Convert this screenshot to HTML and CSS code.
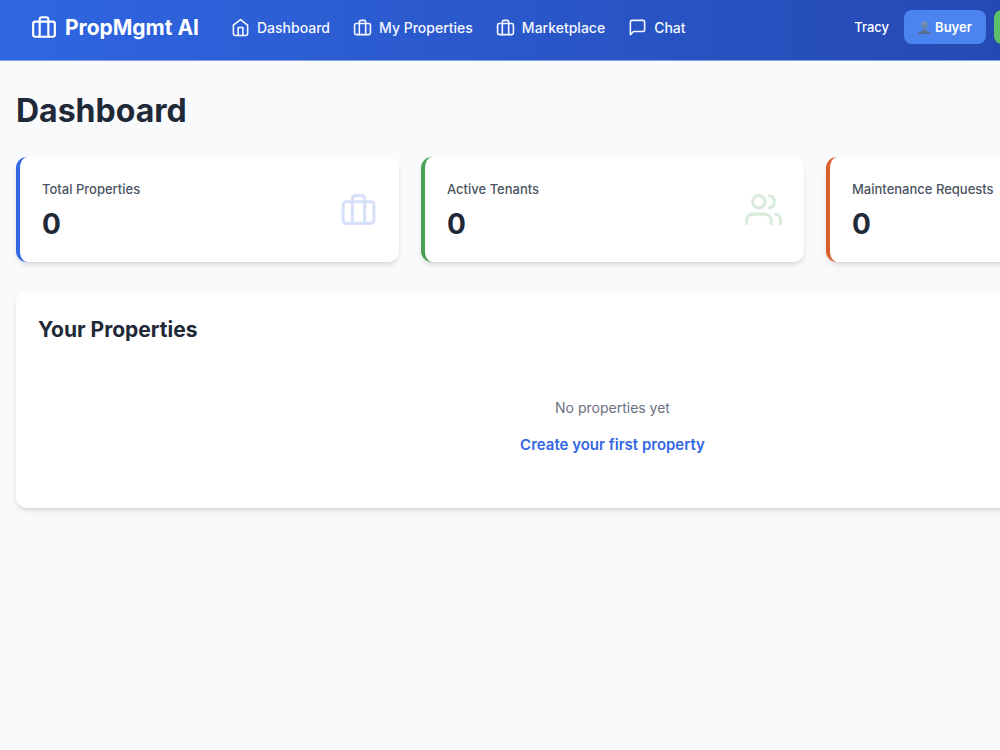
FILE: index.html
```html
<!DOCTYPE html>
<html lang="en">
<head>
<meta charset="utf-8">
<title>PropMgmt AI</title>
<link rel="stylesheet" href="styles.css">
</head>
<body>
<svg class="symbols" aria-hidden="true">
  <symbol id="luggage" viewBox="0 0 24 24"><path d="M8 21V5a2 2 0 0 1 2-2h4a2 2 0 0 1 2 2v16"/><rect x="2" y="7" width="20" height="14" rx="2"/></symbol>
  <symbol id="home" viewBox="0 0 24 24"><path d="m3 9 9-7 9 7v11a2 2 0 0 1-2 2H5a2 2 0 0 1-2-2z"/><path d="M9 22V12h6v10"/></symbol>
  <symbol id="chat" viewBox="0 0 24 24"><path d="M21 15a2 2 0 0 1-2 2H7l-4 4V5a2 2 0 0 1 2-2h14a2 2 0 0 1 2 2z"/></symbol>
  <symbol id="users" viewBox="0 0 24 24"><path d="M17 21v-2a4 4 0 0 0-4-4H5a4 4 0 0 0-4 4v2"/><circle cx="9" cy="7" r="4"/><path d="M23 21v-2a4 4 0 0 0-3-3.87"/><path d="M16 3.13a4 4 0 0 1 0 7.75"/></symbol>
</svg>
<div class="page">
  <header class="navbar">
    <a class="brand" href="#"><svg class="icon icon-brand"><use href="#luggage"/></svg>PropMgmt AI</a>
    <nav class="links">
      <a class="link" href="#"><svg class="icon"><use href="#home"/></svg>Dashboard</a>
      <a class="link" href="#"><svg class="icon"><use href="#luggage"/></svg>My Properties</a>
      <a class="link" href="#"><svg class="icon"><use href="#luggage"/></svg>Marketplace</a>
      <a class="link" href="#"><svg class="icon"><use href="#chat"/></svg>Chat</a>
    </nav>
    <div class="account">
      <span class="user">Tracy</span>
      <button class="role" type="button">
        <svg class="person" viewBox="0 0 13 13" aria-hidden="true">
          <defs><linearGradient id="bust" x1="0" y1="0" x2="0" y2="1"><stop offset="0" stop-color="#7897bb"/><stop offset="1" stop-color="#506a94"/></linearGradient></defs>
          <path fill="url(#bust)" d="M6.500 0C4.400 0 3.200 1.500 3.300 3.700c.1 1.900.8 3.200 1.900 4v1.200C4.400 9.900 0 9.700 0 13h13c0-3.300-4.400-3.100-5.200-4.100V7.700c1.100-.8 1.800-2.100 1.900-4C9.800 1.500 8.600 0 6.500 0z"/>
        </svg>Buyer</button>
      <button class="action" type="button"></button>
    </div>
  </header>
  <main class="content">
    <h1 class="title">Dashboard</h1>
    <section class="stats">
      <div class="card stat stat-blue">
        <div><p class="label">Total Properties</p><p class="value">0</p></div>
        <svg class="icon icon-stat"><use href="#luggage"/></svg>
      </div>
      <div class="card stat stat-green">
        <div><p class="label">Active Tenants</p><p class="value">0</p></div>
        <svg class="icon icon-stat"><use href="#users"/></svg>
      </div>
      <div class="card stat stat-orange">
        <div><p class="label">Maintenance Requests</p><p class="value">0</p></div>
      </div>
    </section>
    <section class="card panel">
      <h2 class="subtitle">Your Properties</h2>
      <div class="empty">
        <p class="message">No properties yet</p>
        <a class="create" href="#">Create your first property</a>
      </div>
    </section>
  </main>
</div>
</body>
</html>
```
FILE: styles.css
```css
* { box-sizing: border-box; }
body {
  margin: 0;
  overflow-x: hidden;
  background: #f9fafc;
  color: #1f2937;
  font-family: Inter, "Liberation Sans", sans-serif;
}
h1, h2, p { margin: 0; }
a { text-decoration: none; }
button { border: 0; padding: 0; font-family: inherit; }
.symbols { display: none; }
.page { min-width: 1225px; }

.icon {
  width: 19px;
  height: 19px;
  flex: none;
  fill: none;
  stroke: currentColor;
  stroke-width: 2;
  stroke-linecap: round;
  stroke-linejoin: round;
}
.icon-brand { width: 26px; height: 26px; }
.icon-stat { width: 37px; height: 37px; }

.navbar {
  display: flex;
  align-items: center;
  height: 61px;
  padding: 0 29px 6px 31px;
  border-bottom: 1px solid #86a2e3;
  background: linear-gradient(to right, #2f66e2, #2343a8);
  color: #fff;
}
.brand {
  display: flex;
  align-items: center;
  gap: 8px;
  color: #fff;
  font-size: 21px;
  font-weight: 700;
}
.links { display: flex; gap: 23px; margin-left: 32px; }
.link {
  display: flex;
  align-items: center;
  gap: 7px;
  color: #f4f7ff;
  font-size: 14px;
  font-weight: 500;
}
.account { display: flex; align-items: center; gap: 8px; margin-left: auto; }
.user { margin-right: 7px; font-size: 13px; font-weight: 500; }
.role {
  display: flex;
  align-items: center;
  justify-content: center;
  gap: 4px;
  width: 82px;
  height: 34px;
  border-radius: 8px;
  background: #4b84ef;
  color: #fff;
  font-size: 13px;
  font-weight: 600;
}
.person { width: 13px; height: 13px; }
.action { width: 202px; height: 34px; border-radius: 8px; background: #5dc16a; }

.content { padding: 30px 16px; }
.title { font-size: 32px; line-height: 40px; font-weight: 700; }
.stats {
  display: grid;
  grid-template-columns: repeat(3, 1fr);
  gap: 22px;
  margin: 26px 0 30px;
}
.card {
  border-radius: 11px;
  background: #fff;
  box-shadow: 0 4px 6px -1px rgb(0 0 0 / 10%), 0 2px 4px -2px rgb(0 0 0 / 10%);
}
.stat {
  display: flex;
  align-items: center;
  justify-content: space-between;
  padding: 22px;
  border-left: 4px solid;
}
.stat-blue { border-color: #3367e3; }
.stat-green { border-color: #4ba153; }
.stat-orange { border-color: #db5f2b; }
.stat-blue .icon { color: #d7e0f9; }
.stat-green .icon { color: #d9ebdb; }
.label { color: #4b5563; font-size: 13px; line-height: 20px; font-weight: 500; }
.value { margin-top: 9px; font-size: 28px; line-height: 32px; font-weight: 700; }

.panel { padding: 22px; }
.subtitle { font-size: 21px; line-height: 32px; font-weight: 700; }
.empty {
  display: flex;
  flex-direction: column;
  align-items: center;
  gap: 15px;
  padding: 51px 0 30px;
  font-size: 14px;
  line-height: 22px;
}
.message { color: #6b7280; }
.create { color: #3367e3; font-size: 15px; font-weight: 600; }
```
